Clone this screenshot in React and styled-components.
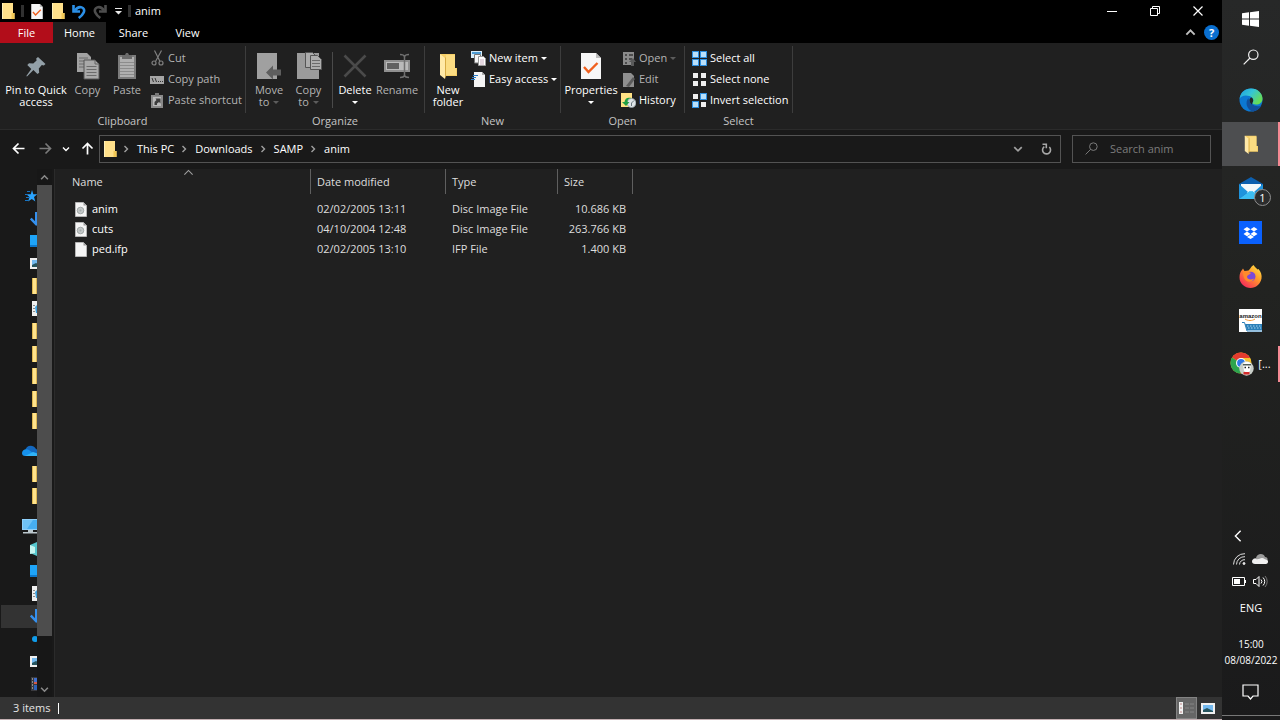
import { useState } from "react";
import styled, { createGlobalStyle } from "styled-components";

const GlobalStyle = createGlobalStyle`
*{
    box-sizing: border-box;
}
body{
    margin: 0;
    background: #191919;
    color: #ffffff;
    font-family: "Open Sans", "Noto Sans", sans-serif;
    font-size: 11px;
    line-height: 16px;
}
button, input{
    font: inherit;
    color: inherit;
    background: none;
    border: 0;
    padding: 0;
    margin: 0;
}
a{
    color: inherit;
    text-decoration: none;
}
svg{
    display: block;
    flex: none;
}
`;

const Desktop = styled.div`
display: flex;
min-height: 100vh;
`;

const ExplorerWindow = styled.main`
display: flex;
flex-direction: column;
flex: 1;
min-width: 0;
border-bottom: 1px solid #c4b0b3;
`;

/* ---------- title bar ---------- */

const TitleBar = styled.header`
display: flex;
align-items: center;
height: 22px;
padding-right: 3px;
background: #000000;
`;

const QuickTools = styled.div`
display: flex;
align-items: center;
gap: 5px;
`;

const QuickButton = styled.button`
display: flex;
align-items: center;
justify-content: center;
width: ${props => props.$narrow ? "10px" : "16px"};
height: 20px;
`;

const ToolDivider = styled.span`
width: 3px;
height: 12px;
background: #303030;
`;

const WindowTitle = styled.h1`
margin: 0 0 0 4px;
font-size: 11px;
font-weight: normal;
flex: 1;
`;

const WindowButton = styled.button`
display: flex;
align-items: center;
justify-content: center;
width: 43px;
height: 20px;
`;

const TabBar = styled.nav`
display: flex;
align-items: stretch;
height: 21px;
background: #000000;
`;

const Tab = styled.button`
width: ${props => props.$wide ? "55px" : "53px"};
padding-top: 1px;
background: ${props => props.$file ? "#b20d1a" : props.$active ? "#202020" : "#000000"};
`;

const TabBarEnd = styled.div`
display: flex;
align-items: center;
gap: 8px;
margin-left: auto;
padding-right: 3px;
`;

/* ---------- ribbon ---------- */

const Ribbon = styled.section`
display: flex;
background: #202020;
border-bottom: 1px solid #2b2b2b;
`;

const Group = styled.div`
display: flex;
flex-direction: column;
width: ${props => props.$width}px;
padding-top: 5px;
`;

const GroupContent = styled.div`
display: flex;
height: 64px;
padding-left: ${props => props.$pad}px;
`;

const GroupLabel = styled.div`
height: 17px;
line-height: 18px;
text-align: center;
color: #c4c4c4;
`;

const GroupDivider = styled.div`
width: 1px;
margin: 3px 0 16px;
background: #3d3d3d;
`;

const InnerDivider = styled.div`
width: 1px;
margin: 4px;
background: #4a4a4a;
`;

const LargeButton = styled.button`
display: flex;
flex-direction: column;
align-items: center;
gap: 4px;
width: ${props => props.$width}px;
padding-top: 4px;
line-height: 12px;
color: ${props => props.disabled ? "#b4b4b4" : "#ffffff"};
`;

const LargeIcon = styled.span`
display: flex;
align-items: center;
justify-content: center;
height: 28px;
`;

const LargeText = styled.span`
display: flex;
flex-direction: column;
align-items: center;
white-space: nowrap;
`;

const TextWithArrow = styled.span`
display: flex;
align-items: center;
gap: 4px;
min-height: 12px;
`;

const SmallColumn = styled.div`
display: flex;
flex-direction: column;
gap: 1px;
padding-left: ${props => props.$pad || 0}px;
`;

const SmallButton = styled.button`
display: flex;
align-items: center;
gap: 3px;
height: 20px;
white-space: nowrap;
color: ${props => props.disabled ? "#b4b4b4" : "#ffffff"};
`;

const Arrow = styled.span`
border: 3px solid transparent;
border-top-color: ${props => props.$dim ? "#5c5c5c" : "#ffffff"};
border-bottom: 0;
`;

/* ---------- address row ---------- */

const AddressRow = styled.section`
display: flex;
align-items: center;
height: 39px;
padding: 0 11px 2px 8px;
background: #191919;
`;

const NavButtons = styled.div`
display: flex;
align-items: center;
width: 91px;
gap: 7px;
`;

const NavButton = styled.button`
display: flex;
align-items: center;
justify-content: center;
width: ${props => props.$narrow ? "8px" : "20px"};
height: 24px;
`;

const AddressBox = styled.div`
display: flex;
align-items: center;
flex: 1;
height: 28px;
padding: 0 7px 0 2px;
border: 1px solid #535353;
`;

const Crumbs = styled.ol`
display: flex;
align-items: center;
flex: 1;
margin: 0;
padding: 0 0 0 4px;
list-style: none;
`;

const Crumb = styled.li`
display: flex;
align-items: center;
gap: 7px;
margin-right: 6px;
white-space: nowrap;
`;

const AddressButton = styled.button`
display: flex;
align-items: center;
justify-content: center;
width: 14px;
height: 24px;
margin-left: 14px;
`;

const SearchBox = styled.label`
display: flex;
align-items: center;
gap: 12px;
width: 139px;
height: 28px;
margin-left: 11px;
padding: 0 12px;
border: 1px solid #535353;
& input{
    flex: 1;
    min-width: 0;
    outline: none;
}
& input::placeholder{
    color: #7c7c7c;
    opacity: 1;
}
`;

/* ---------- body ---------- */

const Body = styled.div`
display: flex;
flex: 1;
`;

const Sidebar = styled.aside`
display: flex;
flex-direction: column;
width: 37px;
padding: 16px 0 2px 1px;
overflow: hidden;
background: #191919;
`;

const SideItem = styled.a`
display: flex;
align-items: center;
flex: 3;
padding-left: ${props => props.$nested ? "29px" : "21px"};
background: ${props => props.$selected ? "#333333" : "transparent"};
`;

const SideGap = styled.div`
flex: 1;
`;

const ScrollBar = styled.div`
display: flex;
flex-direction: column;
width: 15px;
background: #171717;
`;

const ScrollButton = styled.button`
display: flex;
align-items: center;
justify-content: center;
height: 16px;
`;

const ScrollThumb = styled.div`
flex: 10;
background: #4d4d4d;
`;

const ScrollRest = styled.div`
flex: 1;
`;

const FileArea = styled.section`
flex: 1;
margin-left: 2px;
border-left: 1px solid #2b2b2b;
background: #202020;
`;

const FileTable = styled.table`
width: 578px;
table-layout: fixed;
border-collapse: separate;
border-spacing: 0;
`;

const HeadCell = styled.th`
position: relative;
width: ${props => props.$width}px;
height: 25px;
padding: 0 0 0 ${props => props.$first ? "17px" : "6px"};
border-right: 1px solid #5f5f5f;
font-weight: normal;
text-align: left;
color: #dedede;
`;

const SortMark = styled.span`
position: absolute;
top: -2px;
left: 50%;
`;

const Spacer = styled.td`
height: 5px;
padding: 0;
`;

const Cell = styled.td`
height: 20px;
padding: 0 7px 0 6px;
text-align: ${props => props.$right ? "right" : "left"};
color: #dedede;
white-space: nowrap;
`;

const NameCell = styled.td`
padding: 0 0 0 20px;
& a{
    display: flex;
    align-items: center;
    gap: 5px;
}
`;

const StatusBar = styled.footer`
display: flex;
align-items: center;
height: 22px;
padding: 0 4px 0 13px;
background: #333333;
`;

const StatusText = styled.span`
display: flex;
align-items: center;
gap: 8px;
flex: 1;
color: #e4e4e4;
`;

const StatusDivider = styled.span`
width: 1px;
height: 11px;
background: #ffffff;
`;

const ViewButton = styled.button`
display: flex;
align-items: center;
justify-content: center;
width: 21px;
height: 22px;
border: 1px solid ${props => props.$active ? "#838383" : "transparent"};
background: ${props => props.$active ? "#666666" : "transparent"};
`;

/* ---------- taskbar ---------- */

const Taskbar = styled.aside`
display: flex;
flex-direction: column;
width: 58px;
background: linear-gradient(#272828, #222321 40%, #1a1a1b);
`;

const SystemButton = styled.button`
display: flex;
align-items: center;
justify-content: center;
height: ${props => props.$height || 38}px;
padding-right: ${props => props.$left ? "26px" : "1px"};
`;

const AppList = styled.div`
display: flex;
flex-direction: column;
margin-top: 2px;
`;

const AppButton = styled.button`
display: flex;
align-items: center;
justify-content: center;
gap: 3px;
position: relative;
height: 44px;
padding-right: 1px;
background: ${props => props.$active ? "#4d4e50" : "transparent"};
&::after{
    content: "";
    position: absolute;
    top: ${props => props.$active ? "0" : "4px"};
    right: 0;
    bottom: ${props => props.$active ? "0" : "4px"};
    width: 2px;
    background: ${props => props.$open ? "#f58a94" : "transparent"};
}
`;

const Badge = styled.span`
position: absolute;
left: 32px;
top: 23px;
width: 17px;
height: 17px;
border: 1px solid #8f8f8f;
border-radius: 50%;
background: #2b2c2d;
line-height: 15px;
text-align: center;
`;

const Tray = styled.div`
display: flex;
flex-direction: column;
margin-top: auto;
`;

const TrayRow = styled.div`
display: flex;
justify-content: center;
align-items: center;
gap: 6px;
height: 22px;
padding-right: 2px;
`;

const Language = styled.button`
height: 32px;
`;

const Clock = styled.time`
padding: 12px 0 1px;
font-size: 10px;
text-align: center;
white-space: nowrap;
`;

const ShowDesktop = styled.button`
height: 5px;
border-top: 1px solid #777777;
`;

/* ---------- drawings ---------- */

const Folder = ({ size = 16 }) => (
    <svg width={size} height={size} viewBox="0 0 16 16">
        <path d="M2 0h11v10h1.500v6H2z" fill="#ffe08a" />
        <path d="M2 0h1v16H2z" fill="#fff0b8" />
        <path d="M11.500 10h3v6h-3z" fill="#f2c855" />
    </svg>
);

const OpenFolder = ({ width, height }) => (
    <svg width={width} height={height} viewBox="0 0 18 26" preserveAspectRatio="none">
        <path d="M1 1h15v14h2v8H4z" fill="#f6cf67" />
        <path d="M7 2h9v13h1v7H7z" fill="#fbdc82" />
        <path d="M1 1l5 4v21l-5-4z" fill="#ffe9a8" />
        <path d="M6 5v21l1-3V4z" fill="#d7ab45" />
    </svg>
);

const CheckPage = ({ width, height }) => (
    <svg width={width} height={height} viewBox="0 0 20 26">
        <path d="M0 0h15l5 5v21H0z" fill="#f7f7f7" />
        <path d="M15 0l5 5h-5z" fill="#bcbcbc" />
        <path d="M3 14l4.500 5 9-9" fill="none" stroke="#f0601e" strokeWidth="2.400" />
    </svg>
);

const Undo = ({ flip }) => (
    <svg width="14" height="15" viewBox="0 0 14 15">
        <g transform={flip ? "matrix(-1 0 0 1 14 0)" : undefined} fill="none" stroke={flip ? "#4d4d4d" : "#2b8fe6"}>
            <path d="M3 6.500C7 .5 14 3.500 11.700 8.500c-.8 1.800-2.200 3.500-5 5.500" strokeWidth="2.600" />
            <path d="M1.500 1v6.500H8" strokeWidth="2.600" />
        </g>
    </svg>
);

const QuickMenu = () => (
    <svg width="7" height="7" viewBox="0 0 7 7">
        <path d="M0 0h7v1H0zM0 3h7L3.500 6.500z" fill="#e8e8e8" />
    </svg>
);

const Pin = () => (
    <svg width="20" height="21" viewBox="0 0 20 21">
        <path d="M12 1l7.500 7-1.700 1.500-2-.4-3 3.400.4 4.200-1.800 1.300-4-4L1 20.500l-.7-.5 5-7-4-4L3 7.200l4.300.3 3.300-3-.4-2z" fill="#93a0a8" />
    </svg>
);

const CopyPages = () => (
    <svg width="24" height="28" viewBox="0 0 24 28">
        <path d="M1 1h10l4 4v15H1z" fill="#a3a3a3" />
        <path d="M3 6h9M3 9h10M3 12h10M3 15h10" stroke="#6b6b6b" />
        <path d="M8 8h11l4 4v15H8z" fill="#a9a9a9" stroke="#555555" />
        <path d="M19 8v4h4" fill="none" stroke="#626262" />
        <path d="M10.500 14.500h10M10.500 17.500h10M10.500 20.500h10M10.500 23.500h10" stroke="#6b6b6b" />
    </svg>
);

const Clipboard = () => (
    <svg width="20" height="28" viewBox="0 0 20 28">
        <path d="M1 3h18v24H1z" fill="#7c7c7c" />
        <path d="M3 5h14v20H3z" fill="#b0b0b0" />
        <path d="M3 10.500h14M3 13.500h14M3 16.500h14M3 19.500h14M3 22.500h14" stroke="#8c8c8c" />
        <path d="M5 3h3l1-2h2l1 2h3v4H5z" fill="#6c6c6c" />
    </svg>
);

const Scissors = () => (
    <svg width="15" height="16" viewBox="0 0 15 16" fill="none" stroke="#808080">
        <path d="M4.500.500l5.500 11M11.500.500L5.500 11.500" strokeWidth="1.200" />
        <circle cx="4" cy="13" r="2" strokeWidth="1.200" />
        <circle cx="11" cy="13" r="2" strokeWidth="1.200" />
    </svg>
);

const PathIcon = () => (
    <svg width="15" height="15" viewBox="0 0 15 15">
        <path d="M0 4h14v8H0z" fill="#a6a6a6" />
        <path d="M2 6l1.500 4M5 6l1.500 4" stroke="#333333" />
        <path d="M8 9.500h1M10 9.500h1M12 9.500h1" stroke="#333333" />
    </svg>
);

const ShortcutIcon = () => (
    <svg width="15" height="15" viewBox="0 0 15 15">
        <path d="M1 2h12v13H1z" fill="#8a8a8a" />
        <path d="M5 0h4v3H5z" fill="#777777" />
        <path d="M3 4h8v9H3z" fill="#b9b9b9" />
        <path d="M4.500 12V9l2-2-1-1.500h5v5L9 9l-2 1.500V12z" fill="#3c3c3c" />
    </svg>
);

const MovePage = () => (
    <svg width="26" height="28" viewBox="0 0 26 28">
        <path d="M1 1h20v26H1z" fill="#a0a0a0" />
        <path d="M10 20.500l7-7v4h8v6h-8v4z" fill="#5e5e5e" />
    </svg>
);

const CopyToPages = () => (
    <svg width="26" height="28" viewBox="0 0 26 28">
        <path d="M1 1h22v26H1z" fill="#9b9b9b" />
        <path d="M9.500.500h7l3 3v12h-10z" fill="#acacac" stroke="#555555" />
        <path d="M14.500 3.500h7l4 4v10h-11z" fill="#adadad" stroke="#555555" />
        <path d="M16 8.500h8M16 11.500h8M16 14.500h8" stroke="#6b6b6b" />
    </svg>
);

const DeleteCross = () => (
    <svg width="24" height="24" viewBox="0 0 24 24">
        <path d="M1.500 1.500l21 21M22.500 1.500l-21 21" stroke="#4a4a4a" strokeWidth="2.600" />
    </svg>
);

const RenameIcon = () => (
    <svg width="28" height="26" viewBox="0 0 28 26">
        <path d="M1 7h26v12H1z" fill="#8f8f8f" />
        <path d="M3 9h22v8H3z" fill="#bababa" />
        <path d="M4 10h12v6H4z" fill="#606060" />
        <path d="M17 1.500c3 0 4 .5 4.500 2 .5-1.500 1.500-2 4.500-2M17 24.500c3 0 4-.5 4.500-2 .5 1.500 1.500 2 4.500 2M21.500 3v20" fill="none" stroke="#707070" strokeWidth="1.500" />
    </svg>
);

const NewItemIcon = () => (
    <svg width="15" height="16" viewBox="0 0 15 16">
        <path d="M0 1h11v7H0z" fill="#d9edf9" />
        <path d="M1 2h9v2H1z" fill="#4d9cd3" />
        <path d="M3.500 4.500h6V13h-6z" fill="#f6f6f6" stroke="#777777" />
        <path d="M7.500 6.500h5l2 2v7h-7z" fill="#ffffff" stroke="#9a9a9a" />
        <path d="M9 10h4M9 12h4M9 14h4" stroke="#c7aebf" />
    </svg>
);

const EasyAccessIcon = () => (
    <svg width="15" height="16" viewBox="0 0 15 16">
        <path d="M3 1h8l3 3v12H3z" fill="#f4f4f4" />
        <path d="M11 1v3h3z" fill="#aeaeae" />
        <path d="M2 4.500h5M1 6.500h4M0 8.500h4" stroke="#2c7ec9" strokeWidth="1.200" />
    </svg>
);

const OpenIcon = () => (
    <svg width="15" height="15" viewBox="0 0 15 15">
        <path d="M2 1h11v13H2z" fill="#8b8b8b" />
        <path d="M4 3h2v2H4zM4 7h2v2H4zM4 11h2v2H4zM8 3h4v2H8zM8 7h3v2H8z" fill="#4c4c4c" />
        <path d="M8 11l4-4 3 4h-2v4h-3v-4z" fill="#5a5a5a" />
    </svg>
);

const EditIcon = () => (
    <svg width="15" height="15" viewBox="0 0 15 15">
        <path d="M2 1h8l3 3v11H2z" fill="#8f8f8f" />
        <path d="M5 14l7-9 2 2-6 8z" fill="#5b5b5b" />
    </svg>
);

const HistoryIcon = () => (
    <svg width="15" height="15" viewBox="0 0 15 15">
        <path d="M0 0h11v14H0z" fill="#ffe285" />
        <circle cx="10.500" cy="10" r="4.500" fill="#dfe5e8" stroke="#8b989e" strokeWidth=".8" />
        <path d="M10.500 10l2.500-2.500M10.500 10v3" stroke="#6b7880" />
        <path d="M1 9h2.500c.5-4 3-5 7-4-3 .3-4 1.500-4 4h2l-3.500 4z" fill="#21a045" />
    </svg>
);

const SelectIcon = ({ picked = [] }) => (
    <svg width="15" height="15" viewBox="0 0 15 15">
        {[[0, 0], [8, 0], [0, 8], [8, 8]].map(([x, y], i) => (
            <g key={i}>
                {picked.includes(i) && <path d={`M${x} ${y}h7v7h-7z`} fill="#2d8fe0" />}
                <path d={`M${x + 1} ${y + 1}h5v5h-5z`} fill={picked.includes(i) ? "#b9e0fb" : "#f0f0f0"} />
            </g>
        ))}
    </svg>
);

const Chevron = ({ dir = "right", size = 8, color = "#ffffff", stroke = 1.4 }) => {
    const paths = {
        right: "M2.500 1l3 3-3 3",
        left: "M5.500 1l-3 3 3 3",
        down: "M1 2.500l3 3 3-3",
        up: "M1 5.500l3-3 3 3",
    };
    return (
        <svg width={size} height={size} viewBox="0 0 8 8">
            <path d={paths[dir]} fill="none" stroke={color} strokeWidth={stroke} />
        </svg>
    );
};

const LongArrow = ({ turn = 0, color = "#ffffff" }) => (
    <svg width="13" height="13" viewBox="0 0 13 13">
        <path d="M12.500 6.500H1.500M6.500 1.500l-5 5 5 5" fill="none" stroke={color} strokeWidth="1.700" transform={`rotate(${turn} 6.500 6.500)`} />
    </svg>
);

const Refresh = () => (
    <svg width="11" height="12" viewBox="0 0 11 12" fill="none" stroke="#a8a8a8" strokeWidth="1.600">
        <path d="M8.300 4a4 4 0 1 1-5 -.4" />
        <path d="M1.500 1.200h3.800v4" />
    </svg>
);

const Magnifier = ({ size, color }) => (
    <svg width={size} height={size} viewBox="0 0 16 16" fill="none" stroke={color} strokeWidth="1.200">
        <circle cx="10.300" cy="5.700" r="4.700" />
        <path d="M7 9L.7 15.300" />
    </svg>
);

const DiscFile = ({ disc }) => (
    <svg width="12" height="15" viewBox="0 0 12 15">
        <path d="M.500.500h8l3 3v11H.500z" fill="#f5f5f5" stroke="#b5b5b5" />
        <path d="M8.500.500v3h3z" fill="#9d9d9d" />
        {disc && <circle cx="5.500" cy="8.500" r="3.300" fill="#c3c8c8" stroke="#949a9a" strokeWidth=".8" />}
        {disc && <circle cx="5.500" cy="8.500" r="1" fill="#a4aaaa" />}
    </svg>
);

const Star = () => (
    <svg width="17" height="14" viewBox="0 0 17 14">
        <path d="M10 1l1.300 4.200h4.200L12 8l1.300 4.500-3.500-2.500L6 12.500 7.500 8 4.300 5.200h4.500z" fill="#2aa4ff" />
        <path d="M5 2.500h3M3 5.500h3M4 8.500h3M3 11.500h3" stroke="#1673c4" />
    </svg>
);

const DownArrow = () => (
    <svg width="16" height="16" viewBox="0 0 16 16" fill="none" stroke="#3590ee" strokeWidth="2.400">
        <path d="M6.200 1v12M.8 7.500l5.400 5.700 5.400-5.700" />
    </svg>
);

const DesktopIcon = () => (
    <svg width="16" height="14" viewBox="0 0 16 14">
        <path d="M0 1h16v12H0z" fill="#1ea4f8" />
        <path d="M0 11h16v2H0z" fill="#0b78cc" />
    </svg>
);

const PictureIcon = () => (
    <svg width="14" height="11" viewBox="0 0 14 11">
        <path d="M0 0h14v11H0z" fill="#f0f0f0" />
        <path d="M2 2h10v7H2z" fill="#74b9ef" />
        <path d="M2 9V7l4-2 6 3v1z" fill="#27555f" />
    </svg>
);

const DocIcon = () => (
    <svg width="14" height="15" viewBox="0 0 14 15">
        <path d="M2 0h12v15H2z" fill="#f0f0f0" />
        <path d="M3 4.500h2M3 7.500h2M3 10.500h2" stroke="#8a8a8a" />
        <path d="M5 6l3-3v9H6z" fill="#3aa0e0" />
    </svg>
);

const SideFolder = () => (
    <svg width="16" height="16" viewBox="0 0 16 16">
        <path d="M2 0h12v16H2z" fill="#ffe38c" />
        <path d="M2 0h1v16H2zM6 0h1v16H6z" fill="#dcb653" />
    </svg>
);

const OneDrive = () => (
    <svg width="18" height="12" viewBox="0 0 18 12">
        <path d="M3 6C4 0 11-1 14 4c3 1 4 3 4 4L8 9z" fill="#1368bf" />
        <path d="M0 8c0-3 4-5 7-3l8 6H3C1 11 0 10 0 8z" fill="#1691ec" />
        <path d="M3 11l8-4 7 2v2z" fill="#30b4f8" />
    </svg>
);

const Monitor = () => (
    <svg width="17" height="15" viewBox="0 0 17 15">
        <path d="M0 0h17v11H0z" fill="#8ed0fb" />
        <path d="M1 1h15v9H1z" fill="#47aef1" />
        <path d="M1 1h10L5 10H1z" fill="#70c3f6" />
        <path d="M6 11h5v2H6zM1 13h14v1.500H1z" fill="#bcc8ce" />
    </svg>
);

const Cube = () => (
    <svg width="14" height="14" viewBox="0 0 14 14">
        <path d="M0 3l7-3 7 3v8l-7 3-7-3z" fill="#55c7ce" />
        <path d="M0 3l5 2v6l-5 1z" fill="#c5f5f0" />
    </svg>
);

const Music = () => (
    <svg width="14" height="16" viewBox="0 0 14 16">
        <circle cx="5" cy="8" r="3" fill="#109cea" />
    </svg>
);

const Film = () => (
    <svg width="14" height="14" viewBox="0 0 14 14">
        <path d="M1 0h13v14H1z" fill="#3a3a3e" />
        <path d="M2 2h1M2 5h1M2 8h1M2 11h1" stroke="#dddddd" />
        <path d="M4 1h8v5H4z" fill="#3e6fd0" />
        <path d="M4 5h3v2H4z" fill="#d35a48" />
        <path d="M4 8h8v5H4z" fill="#2d61b8" />
    </svg>
);

const WindowsLogo = () => (
    <svg width="17" height="16" viewBox="0 0 17 16">
        <path d="M0 2.300l7-1v6.200H0zM8 1.200L17 0v7.500H8zM0 8.500h7v6.200l-7-1zM8 8.500h9V16l-9-1.200z" fill="#ffffff" />
    </svg>
);

const Edge = () => (
    <svg width="24" height="24" viewBox="0 0 24 24">
        <defs>
            <linearGradient id="edgeTop" x1="0" y1="0" x2="1" y2=".6">
                <stop offset="0" stopColor="#1d9fe0" />
                <stop offset=".5" stopColor="#35c5d5" />
                <stop offset="1" stopColor="#68dd52" />
            </linearGradient>
        </defs>
        <circle cx="12" cy="12" r="11.500" fill="#0c78d2" />
        <path d="M.6 11C1.500 4 6 .5 12 .5c7 0 11.500 5 11.500 10 0 4-3 6-6.500 6-2.500 0-4-1-3.500-2 1.500-1.500 1.200-5-3-6.500C6 6.500 1.500 8 .6 11z" fill="url(#edgeTop)" />
        <path d="M9.500 10c-4 4-1.500 12 4 13.400 4-.4 7.500-3 9-6-3 1.500-7 1-8.800-.8-2.500-1.600-4-3-4.200-6.600z" fill="#114f9b" />
        <path d="M13.500 14.500c1-1 1.200-3.500-.8-5-3 .5-3 4.500.3 7z" fill="#202425" />
    </svg>
);

const Mail = () => (
    <svg width="24" height="22" viewBox="0 0 24 22">
        <path d="M0 7l12-7 12 7v15H0z" fill="#0d5fae" />
        <path d="M2 7h20v9H2z" fill="#f4f8fa" />
        <path d="M0 7l9 8-9 7zM24 7l-9 8 9 7z" fill="#1f93dc" />
        <path d="M0 22l12-9 12 9z" fill="#3cbdf2" />
        <path d="M2 7l10 7.500L22 7z" fill="#f4f8fa" />
    </svg>
);

const Dropbox = () => (
    <svg width="23" height="23" viewBox="0 0 23 23">
        <path d="M0 0h23v23H0z" fill="#0a61fe" />
        <path d="M8 6l3.500 2.300L8 10.600 4.500 8.300zM15 6l3.500 2.300-3.500 2.300-3.500-2.300zM8 10.600l3.500 2.300L8 15.200l-3.500-2.300zM15 10.600l3.500 2.300-3.500 2.300-3.500-2.300zM11.500 13.700l3.500 2.200-3.500 2.200L8 15.900z" fill="#ffffff" />
    </svg>
);

const Firefox = () => (
    <svg width="23" height="23" viewBox="0 0 23 23">
        <defs>
            <linearGradient id="fox" x1="1" y1="0" x2=".2" y2="1">
                <stop offset="0" stopColor="#fff04a" />
                <stop offset=".45" stopColor="#ff9a2a" />
                <stop offset="1" stopColor="#f5245d" />
            </linearGradient>
        </defs>
        <path d="M14.500 0c1 2 3 3 4 4.500l1-.5c2.500 3 3.500 6 3 9.500C21.500 19 17 23 11.500 23S.5 18.500.5 12.500C.5 9 1.500 6.500 3 5l1-1.500L5.500 6l4-.5c1.500-1 2-3.500 5-5.500z" fill="url(#fox)" />
        <circle cx="11.700" cy="11.500" r="4.800" fill="#7a49d8" />
        <path d="M4 6c4 0 6 1 8 2-1 2-3.500 1.500-4 3.500 0 3 4 4 7 2-1 4-8 4.500-10-.5-1-3-1-5.500-1-7z" fill="#ff8a2b" />
    </svg>
);

const AmazonText = styled.text`
font-family: "Liberation Sans", sans-serif;
font-size: 6px;
font-weight: bold;
`;

const Amazon = () => (
    <svg width="23" height="23" viewBox="0 0 23 23">
        <path d="M0 0h23v23H0z" fill="#ffffff" />
        <AmazonText x="11.500" y="9" textAnchor="middle" fill="#222222">amazon</AmazonText>
        <path d="M6 10c3 2 7 2 10 0" fill="none" stroke="#f39a35" />
        <path d="M6 15h17v6H8z" fill="#2b7fb8" />
        <path d="M3 13.500h2.500L8 22h15" fill="none" stroke="#2b7fb8" />
        <path d="M8 17h14M9 19h13" stroke="#a9d5ef" strokeDasharray="1.500 1.500" />
    </svg>
);

const Chrome = () => (
    <svg width="25" height="24" viewBox="0 0 25 24">
        <circle cx="11" cy="11" r="10.500" fill="#f6c22d" />
        <path d="M11 11L2 5.500A10.500 10.500 0 0 1 20.200 6H11z" fill="#e33b2e" />
        <path d="M2 5.500A10.500 10.500 0 0 0 10 21.500l4.500-8z" fill="#2da44e" />
        <circle cx="11" cy="11" r="5" fill="#ffffff" />
        <circle cx="11" cy="11" r="3.900" fill="#2f79e8" />
        <circle cx="16.500" cy="16.500" r="7.200" fill="#c9cfc9" />
        <path d="M13 12c2-3 6-3 8 0l-1 7-3 2-3-2z" fill="#ffffff" />
        <path d="M13 12h8v1.500h-8z" fill="#55605b" />
        <path d="M14.500 15.500h1.500M18 15.500h1.500" stroke="#222222" strokeWidth="1.500" />
        <path d="M13.500 20h6v2.500h-6z" fill="#d42b2b" />
    </svg>
);

const Wifi = () => (
    <svg width="13" height="12" viewBox="0 0 13 12" fill="none" stroke="#e0e0e0">
        <path d="M.5 11.500A11 11 0 0 1 12 .7M3.500 11.500A8 8 0 0 1 12 3.700M6.500 11.500A5 5 0 0 1 12 6.700" />
        <circle cx="11" cy="10.500" r="1" fill="#ffffff" />
    </svg>
);

const Cloud = () => (
    <svg width="16" height="10" viewBox="0 0 16 10">
        <path d="M2 8C0 6 1 4 4 4c1-5 8-5 9-1 3 0 3 3 2 5z" fill="#9b9b9b" />
        <path d="M0 7.500C0 5.500 2 4.500 4 5c2 1 4-1 6-1 2 .2 3 1.500 5 2 2 1 1 4-1 4H3C1 10 0 9 0 7.500z" fill="#f0f0f0" />
    </svg>
);

const Battery = () => (
    <svg width="15" height="9" viewBox="0 0 15 9">
        <path d="M.500.500h12v8H.500zM13.500 3v3" fill="none" stroke="#ffffff" />
        <path d="M2 2h6v5H2z" fill="#ffffff" />
    </svg>
);

const Speaker = () => (
    <svg width="15" height="13" viewBox="0 0 15 13" fill="none" stroke="#ffffff">
        <path d="M.500 4.500H3L6 1.500v10l-3-3H.500z" />
        <path d="M8 4.500a3 3 0 0 1 0 4M10 2.500a5.500 5.500 0 0 1 0 8" />
        <path d="M12 1a8 8 0 0 1 0 11" stroke="#777777" />
    </svg>
);

const Notification = () => (
    <svg width="17" height="16" viewBox="0 0 17 16">
        <path d="M1 1h15v11h-5l-2.500 3L6 12H1z" fill="none" stroke="#ffffff" strokeWidth="1.200" />
    </svg>
);

const DetailsView = () => (
    <svg width="15" height="12" viewBox="0 0 15 12">
        <path d="M0 0h4v12H0z" fill="#f0f0f0" />
        <path d="M1 2h2M1 6h2M1 10h2" stroke="#c08888" />
        <path d="M6 2h4M11 2h4M6 6h4M11 6h4M6 10h4M11 10h4" stroke="#858585" />
    </svg>
);

const HelpIcon = styled.span`
width: 15px;
height: 15px;
border-radius: 50%;
background: #0a6fd0;
line-height: 15px;
font-weight: bold;
text-align: center;
`;

/* ---------- data ---------- */

const tabs = ["Home", "Share", "View"];
const crumbs = ["This PC", "Downloads", "SAMP", "anim"];

const files = [
    { name: "anim", date: "02/02/2005 13:11", type: "Disc Image File", size: "10.686 KB", disc: true },
    { name: "cuts", date: "04/10/2004 12:48", type: "Disc Image File", size: "263.766 KB", disc: true },
    { name: "ped.ifp", date: "02/02/2005 13:10", type: "IFP File", size: "1.400 KB", disc: false },
];

const sideItems = [
    { icon: <Star />, label: "Quick access" },
    { icon: <DownArrow />, label: "Downloads", nested: true },
    { icon: <DesktopIcon />, label: "Desktop", nested: true },
    { icon: <PictureIcon />, label: "Pictures", nested: true },
    { icon: <SideFolder />, label: "Folder", nested: true },
    { icon: <DocIcon />, label: "Documents", nested: true },
    { icon: <SideFolder />, label: "Folder", nested: true },
    { icon: <SideFolder />, label: "Folder", nested: true },
    { icon: <SideFolder />, label: "Folder", nested: true },
    { icon: <SideFolder />, label: "Folder", nested: true },
    { icon: <SideFolder />, label: "Folder", nested: true },
    null,
    { icon: <OneDrive />, label: "OneDrive" },
    { icon: <SideFolder />, label: "Folder", nested: true },
    { icon: <SideFolder />, label: "Folder", nested: true },
    null,
    { icon: <Monitor />, label: "This PC" },
    { icon: <Cube />, label: "3D Objects", nested: true },
    { icon: <DesktopIcon />, label: "Desktop", nested: true },
    { icon: <DocIcon />, label: "Documents", nested: true },
    { icon: <DownArrow />, label: "Downloads", nested: true, selected: true },
    { icon: <Music />, label: "Music", nested: true },
    { icon: <PictureIcon />, label: "Pictures", nested: true },
    { icon: <Film />, label: "Videos", nested: true },
];

const Large = ({ icon, lines, width, disabled, arrow }) => (
    <LargeButton $width={width} disabled={disabled}>
        <LargeIcon>{icon}</LargeIcon>
        <LargeText>
            {lines.map((line, i) => (
                <TextWithArrow key={i}>
                    {line}
                    {arrow && i === lines.length - 1 && <Arrow $dim={disabled} />}
                </TextWithArrow>
            ))}
        </LargeText>
    </LargeButton>
);

const Small = ({ icon, text, disabled, arrow }) => (
    <SmallButton disabled={disabled}>
        {icon}
        {text}
        {arrow && <Arrow $dim={disabled} />}
    </SmallButton>
);

const RibbonView = () => (
    <Ribbon>
        <Group $width={245}>
            <GroupContent $pad={4}>
                <Large width={64} icon={<Pin />} lines={["Pin to Quick", "access"]} />
                <Large width={39} icon={<CopyPages />} lines={["Copy"]} disabled />
                <Large width={40} icon={<Clipboard />} lines={["Paste"]} disabled />
                <SmallColumn $pad={3}>
                    <Small icon={<Scissors />} text="Cut" disabled />
                    <Small icon={<PathIcon />} text="Copy path" disabled />
                    <Small icon={<ShortcutIcon />} text="Paste shortcut" disabled />
                </SmallColumn>
            </GroupContent>
            <GroupLabel>Clipboard</GroupLabel>
        </Group>
        <GroupDivider />
        <Group $width={178}>
            <GroupContent $pad={3}>
                <Large width={40} icon={<MovePage />} lines={["Move", "to"]} disabled arrow />
                <Large width={39} icon={<CopyToPages />} lines={["Copy", "to"]} disabled arrow />
                <InnerDivider />
                <Large width={36} icon={<DeleteCross />} lines={["Delete", ""]} arrow />
                <Large width={48} icon={<RenameIcon />} lines={["Rename"]} disabled />
            </GroupContent>
            <GroupLabel>Organize</GroupLabel>
        </Group>
        <GroupDivider />
        <Group $width={135}>
            <GroupContent $pad={1}>
                <Large width={44} icon={<OpenFolder width={18} height={26} />} lines={["New", "folder"]} />
                <SmallColumn $pad={1}>
                    <Small icon={<NewItemIcon />} text="New item" arrow />
                    <Small icon={<EasyAccessIcon />} text="Easy access" arrow />
                </SmallColumn>
            </GroupContent>
            <GroupLabel>New</GroupLabel>
        </Group>
        <GroupDivider />
        <Group $width={123}>
            <GroupContent $pad={2}>
                <Large width={56} icon={<CheckPage width={20} height={26} />} lines={["Properties", ""]} arrow />
                <SmallColumn $pad={2}>
                    <Small icon={<OpenIcon />} text="Open" disabled arrow />
                    <Small icon={<EditIcon />} text="Edit" disabled />
                    <Small icon={<HistoryIcon />} text="History" />
                </SmallColumn>
            </GroupContent>
            <GroupLabel>Open</GroupLabel>
        </Group>
        <GroupDivider />
        <Group $width={107}>
            <GroupContent $pad={7}>
                <SmallColumn>
                    <Small icon={<SelectIcon picked={[0, 1, 2, 3]} />} text="Select all" />
                    <Small icon={<SelectIcon />} text="Select none" />
                    <Small icon={<SelectIcon picked={[1, 2]} />} text="Invert selection" />
                </SmallColumn>
            </GroupContent>
            <GroupLabel>Select</GroupLabel>
        </Group>
        <GroupDivider />
    </Ribbon>
);

const FileView = () => (
    <FileArea>
        <FileTable>
            <thead>
                <tr>
                    <HeadCell $width={256} $first>
                        Name
                        <SortMark><Chevron dir="up" size={11} color="#a0a0a0" stroke={0.8} /></SortMark>
                    </HeadCell>
                    <HeadCell $width={135}>Date modified</HeadCell>
                    <HeadCell $width={112}>Type</HeadCell>
                    <HeadCell $width={75}>Size</HeadCell>
                </tr>
            </thead>
            <tbody>
                <tr><Spacer colSpan={4} /></tr>
                {files.map((file) => (
                    <tr key={file.name}>
                        <NameCell>
                            <a href="#file"><DiscFile disc={file.disc} />{file.name}</a>
                        </NameCell>
                        <Cell>{file.date}</Cell>
                        <Cell>{file.type}</Cell>
                        <Cell $right>{file.size}</Cell>
                    </tr>
                ))}
            </tbody>
        </FileTable>
    </FileArea>
);

const TaskbarView = () => (
    <Taskbar>
        <SystemButton aria-label="Start"><WindowsLogo /></SystemButton>
        <SystemButton aria-label="Search"><Magnifier size={16} color="#f0f0f0" /></SystemButton>
        <AppList>
            <AppButton aria-label="Edge"><Edge /></AppButton>
            <AppButton aria-label="File Explorer" $active $open><OpenFolder width={14} height={19} /></AppButton>
            <AppButton aria-label="Mail"><Mail /><Badge>1</Badge></AppButton>
            <AppButton aria-label="Dropbox"><Dropbox /></AppButton>
            <AppButton aria-label="Firefox"><Firefox /></AppButton>
            <AppButton aria-label="Amazon"><Amazon /></AppButton>
            <AppButton aria-label="Chrome" $open><Chrome />[...</AppButton>
        </AppList>
        <Tray>
            <SystemButton $height={25} $left aria-label="Hidden icons">
                <Chevron dir="left" size={14} stroke={0.8} />
            </SystemButton>
            <TrayRow><Wifi /><Cloud /></TrayRow>
            <TrayRow><Battery /><Speaker /></TrayRow>
            <Language>ENG</Language>
            <Clock>15:00<br />08/08/2022</Clock>
            <SystemButton $height={46} aria-label="Notifications"><Notification /></SystemButton>
            <ShowDesktop aria-label="Show desktop" />
        </Tray>
    </Taskbar>
);

const App = () => {
    const [activeTab, setActiveTab] = useState("Home");
    const [query, setQuery] = useState("");

    return (
        <Desktop>
            <GlobalStyle />
            <ExplorerWindow>
                <TitleBar>
                    <QuickTools>
                        <QuickButton aria-label="Window menu"><Folder size={16} /></QuickButton>
                        <ToolDivider />
                        <QuickButton aria-label="Properties"><CheckPage width={12} height={15} /></QuickButton>
                        <QuickButton aria-label="New folder"><Folder size={16} /></QuickButton>
                        <QuickButton aria-label="Undo"><Undo /></QuickButton>
                        <QuickButton aria-label="Redo"><Undo flip /></QuickButton>
                        <QuickButton $narrow aria-label="Customize"><QuickMenu /></QuickButton>
                        <ToolDivider />
                    </QuickTools>
                    <WindowTitle>anim</WindowTitle>
                    <WindowButton aria-label="Minimize">
                        <svg width="10" height="10"><path d="M0 5.500h10" stroke="#ffffff" /></svg>
                    </WindowButton>
                    <WindowButton aria-label="Restore">
                        <svg width="10" height="10" fill="none" stroke="#ffffff"><path d="M.500 2.500h7v7h-7zM2.500 2.500v-2h7v7h-2" /></svg>
                    </WindowButton>
                    <WindowButton aria-label="Close">
                        <svg width="10" height="10"><path d="M.500.500l9 9M9.500.500l-9 9" stroke="#ffffff" strokeWidth="1.200" /></svg>
                    </WindowButton>
                </TitleBar>
                <TabBar>
                    <Tab $file>File</Tab>
                    {tabs.map((tab) => (
                        <Tab key={tab} $wide={tab === "Share"} $active={tab === activeTab} onClick={() => setActiveTab(tab)}>{tab}</Tab>
                    ))}
                    <TabBarEnd>
                        <button aria-label="Collapse ribbon"><Chevron dir="up" size={11} color="#c0c0c0" /></button>
                        <HelpIcon>?</HelpIcon>
                    </TabBarEnd>
                </TabBar>
                <RibbonView />
                <AddressRow>
                    <NavButtons>
                        <NavButton aria-label="Back"><LongArrow /></NavButton>
                        <NavButton aria-label="Forward"><LongArrow turn={180} color="#7a7a7a" /></NavButton>
                        <NavButton $narrow aria-label="Recent"><Chevron dir="down" /></NavButton>
                        <NavButton aria-label="Up"><LongArrow turn={90} /></NavButton>
                    </NavButtons>
                    <AddressBox>
                        <Folder size={16} />
                        <Crumbs>
                            {crumbs.map((crumb) => (
                                <Crumb key={crumb}>
                                    <Chevron color="#a0a0a0" />
                                    <a href="#folder">{crumb}</a>
                                </Crumb>
                            ))}
                        </Crumbs>
                        <AddressButton aria-label="Previous locations"><Chevron dir="down" size={10} color="#a0a0a0" /></AddressButton>
                        <AddressButton aria-label="Refresh"><Refresh /></AddressButton>
                    </AddressBox>
                    <SearchBox>
                        <Magnifier size={13} color="#7c7c7c" />
                        <input
                            aria-label="Search anim"
                            placeholder="Search anim"
                            value={query}
                            onChange={(e) => setQuery(e.target.value)}
                        />
                    </SearchBox>
                </AddressRow>
                <Body>
                    <Sidebar>
                        {sideItems.map((item, i) => item ? (
                            <SideItem key={i} href="#place" aria-label={item.label} $nested={item.nested} $selected={item.selected}>
                                {item.icon}
                            </SideItem>
                        ) : <SideGap key={i} />)}
                    </Sidebar>
                    <ScrollBar>
                        <ScrollButton aria-label="Scroll up"><Chevron dir="up" size={9} color="#8a8a8a" /></ScrollButton>
                        <ScrollThumb />
                        <ScrollRest />
                        <ScrollButton aria-label="Scroll down"><Chevron dir="down" size={9} color="#8a8a8a" /></ScrollButton>
                    </ScrollBar>
                    <FileView />
                </Body>
                <StatusBar>
                    <StatusText>3 items<StatusDivider /></StatusText>
                    <ViewButton $active aria-label="Details"><DetailsView /></ViewButton>
                    <ViewButton aria-label="Large icons"><PictureIcon /></ViewButton>
                </StatusBar>
            </ExplorerWindow>
            <TaskbarView />
        </Desktop>
    );
};

export default App;
